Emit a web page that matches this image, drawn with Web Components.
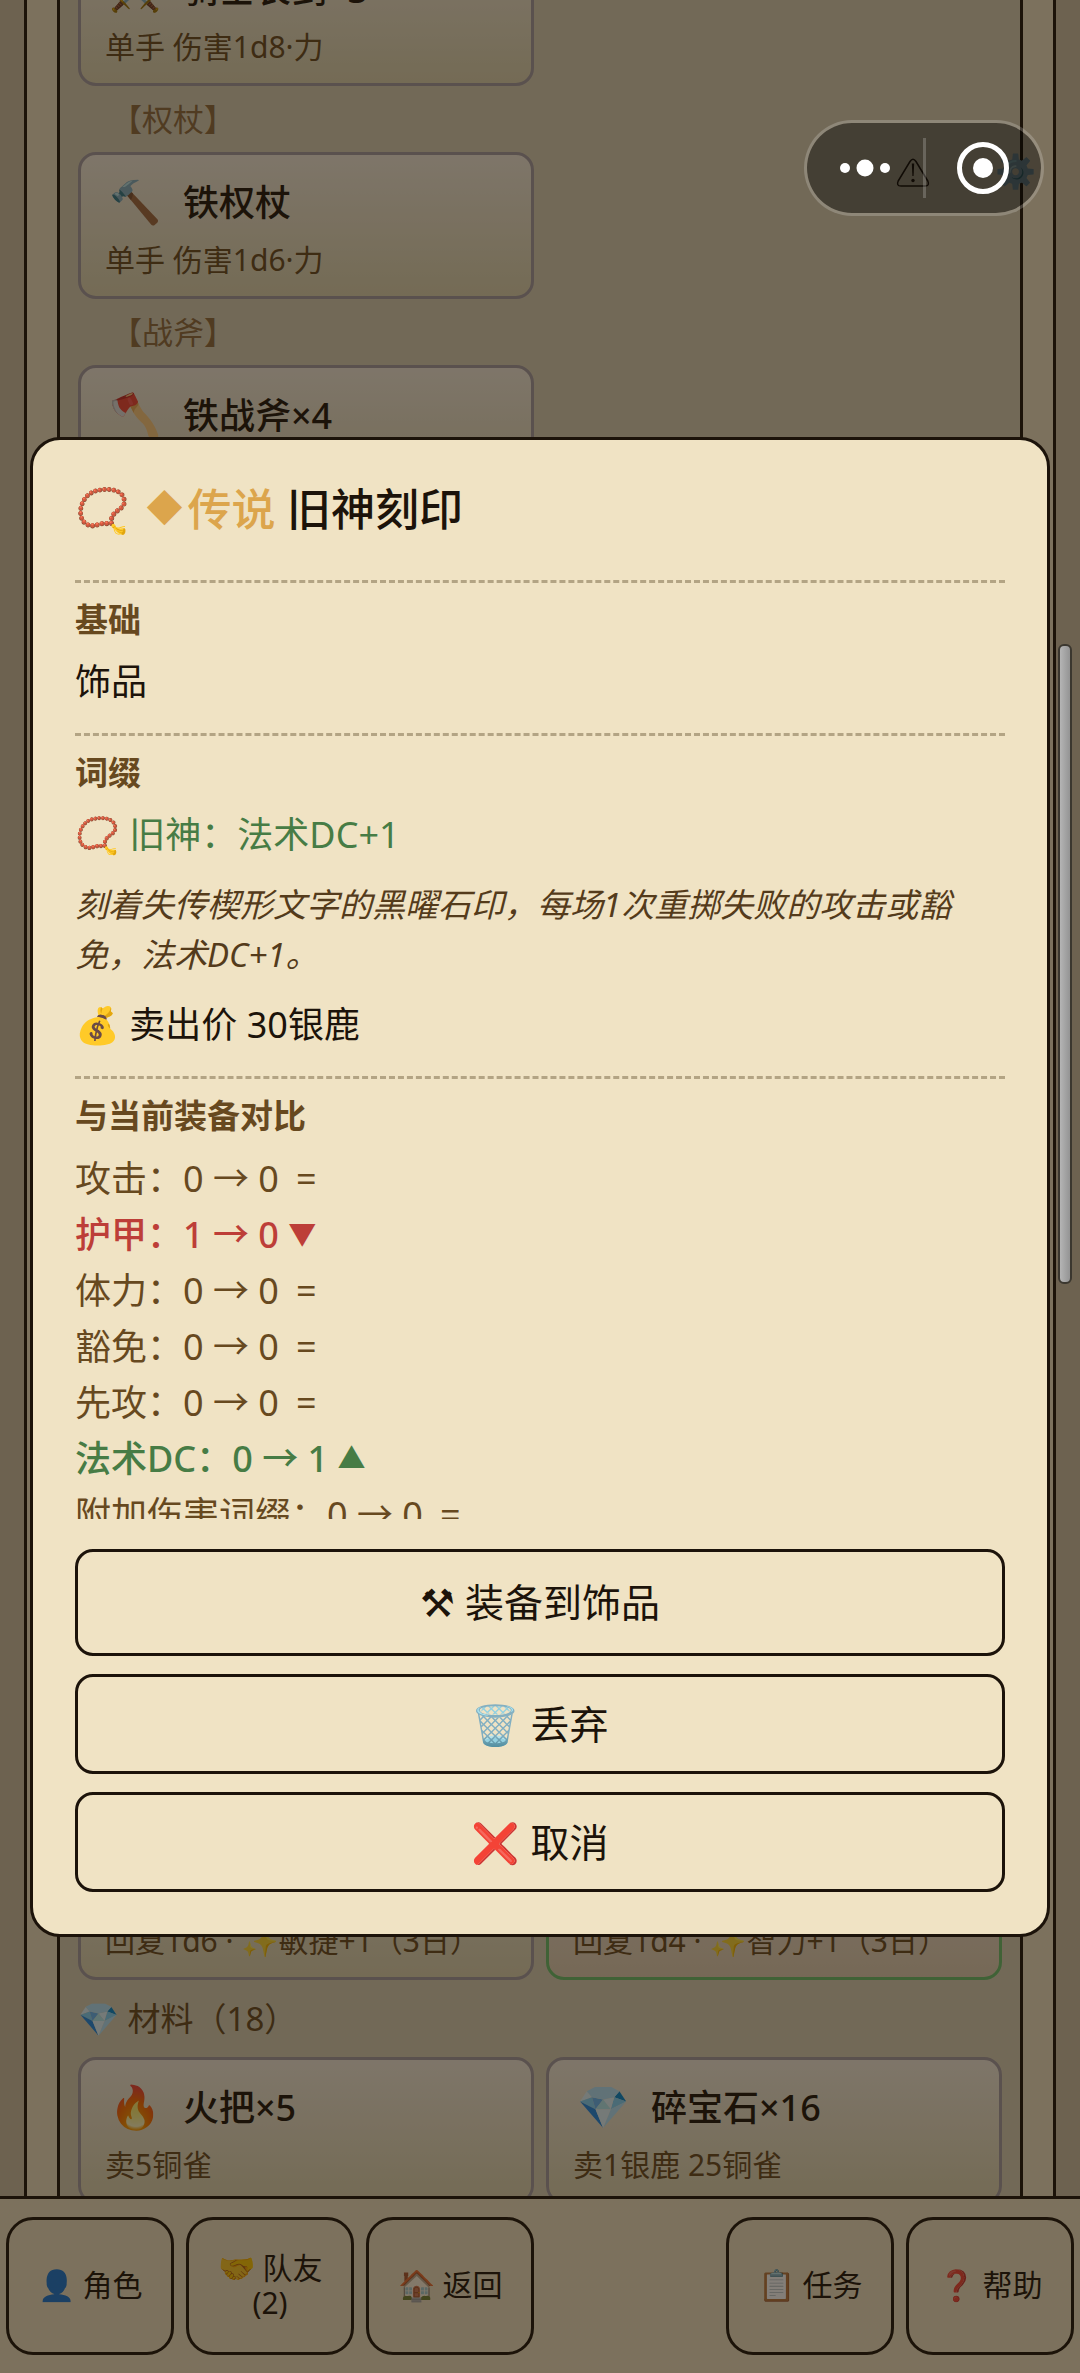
<!DOCTYPE html>
<html lang="zh-CN">
<head>
<meta charset="utf-8">
<title>背包</title>
<meta name="viewport" content="width=device-width, initial-scale=1">
<style>
:root{
  --ink:#1c130a; --brown:#67491f; --paper:#f0e3c4; --font:"Noto Sans","Noto Sans CJK SC",sans-serif;
}
html,body{margin:0;height:100%}
body{font-family:var(--font);font-weight:400;color:var(--ink);overflow:hidden}
</style>
</head>
<body>
<game-app></game-app>
<script>
function define(name, css, html){
  const tpl=document.createElement('template');
  tpl.innerHTML='<style>*{box-sizing:border-box}'+css+'</style>'+html;
  customElements.define(name, class extends HTMLElement{
    constructor(){
      super();
      this.attachShadow({mode:'open'}).appendChild(tpl.content.cloneNode(true));
    }
  });
}

define('item-card',`
:host{display:block;border:3px solid var(--edge,#a49ba2);border-radius:18px;padding:18px 24px;
  background:linear-gradient(#f4ecde,var(--low,#ded5b1));height:147px;box-sizing:border-box}
.head{display:flex;align-items:center;gap:18px;height:60px}
.icon{width:60px;font-size:42px;line-height:56px;height:60px;text-align:center}
h3{margin:0;font-size:36px;line-height:60px;font-weight:500;white-space:nowrap}
p{margin:0;font-size:30px;line-height:54px;color:var(--brown);white-space:nowrap}
`,`<div class="head"><span class="icon"><slot name="icon"></slot></span><h3><slot name="name"></slot></h3></div><p><slot></slot></p>`);

define('group-label',`
:host{display:block;font-size:31px;line-height:66px;padding-left:33px;color:#8f6b3f}
:host([major]){font-size:33px;line-height:77px;padding-left:0;color:var(--brown)}
`,`<slot></slot>`);

define('bag-list',`
:host{display:flex;flex-direction:column;flex:1;min-height:0;box-sizing:border-box;
  margin:0 24px;padding:0 30px;border:solid var(--ink);border-width:0 3px;background:var(--paper);overflow:hidden}
.inner{flex:1;display:flex;flex-direction:column;justify-content:space-between;min-height:0;
  border:solid var(--ink);border-width:0 3px;padding:0 18px;background:#d9d1b7}
.grid{display:grid;grid-template-columns:1fr 1fr;column-gap:12px}
.grid>*{grid-column:1}
.grid>.right{grid-column:2}
.grid>.full{grid-column:1/-1}
.upper{margin-top:-61px}
.lower{margin-bottom:-8px}
.good{--edge:#6ac26e;--low:#e2cfb4}
`,`<div class="inner">
<div class="grid upper">
<item-card><span slot="icon">⚔️</span><span slot="name">骑士长剑×3</span>单手 伤害1d8·力</item-card>
<group-label class="full">【权杖】</group-label>
<item-card><span slot="icon">🔨</span><span slot="name">铁权杖</span>单手 伤害1d6·力</item-card>
<group-label class="full">【战斧】</group-label>
<item-card><span slot="icon">🪓</span><span slot="name">铁战斧×4</span></item-card>
</div>
<div class="grid lower">
<item-card>回复1d6 · ✨敏捷+1（3日）</item-card>
<item-card class="right good">回复1d4 · ✨智力+1（3日）</item-card>
<group-label class="full" major>💎 材料（18）</group-label>
<item-card><span slot="icon">🔥</span><span slot="name">火把×5</span>卖5铜雀</item-card>
<item-card class="right"><span slot="icon">💎</span><span slot="name">碎宝石×16</span>卖1银鹿 25铜雀</item-card>
</div></div>`);

define('nav-button',`
:host{display:block}
button{display:block;width:100%;height:138px;padding:0 12px 3px;border:3px solid var(--ink);border-radius:27px;background:transparent;
  font:inherit;font-size:30px;line-height:35px;color:var(--ink)}
`,`<button type="button"><slot></slot></button>`);

define('bottom-nav',`
:host{display:block;border-top:3px solid var(--ink);background:var(--paper)}
nav{display:grid;grid-template-columns:repeat(6,1fr);gap:12px;padding:18px 6px}
.far{grid-column:5}
`,`<nav><nav-button>👤 角色</nav-button><nav-button>🤝 队友<br>(2)</nav-button><nav-button>🏠 返回</nav-button>
<nav-button class="far">📋 任务</nav-button><nav-button>❓ 帮助</nav-button></nav>`);

define('info-section',`
:host{display:block;border-top:3px dashed #b3a484;padding:12px 0 24px}
h3{margin:0 0 10px;font-size:33px;line-height:50px;font-weight:700;color:var(--brown)}
`,`<h3><slot name="title"></slot></h3><slot></slot>`);

define('compare-row',`
:host{display:block;font-size:36px;line-height:56px;color:var(--brown);white-space:nowrap}
:host([trend]){font-weight:500}
:host([trend=down]){color:#bd3e38}
:host([trend=up]){color:#477c45}
.mark{display:inline-block;min-width:36px;text-align:center}
:host([trend]) .mark{min-width:28px;font-size:28px;line-height:28px;vertical-align:3px}
`,`<slot></slot> <span class="mark"><slot name="mark"></slot></span>`);

define('action-button',`
:host{display:block}
button{display:block;width:100%;height:100px;border:3px solid var(--ink);border-radius:18px;background:transparent;
  font:inherit;font-size:39px;line-height:58px;color:var(--ink)}
:host([primary]) button{height:107px}
`,`<button type="button"><slot></slot></button>`);

define('item-dialog',`
:host{display:flex;flex-direction:column;width:100%;max-height:calc(100vh - 873px);box-sizing:border-box;padding:42px;
  border:3px solid var(--ink);border-radius:30px;background:var(--paper)}
.scroll{flex:1;min-height:0;overflow:auto;scrollbar-width:none}
h2{margin:0 0 44px;font-size:44px;line-height:54px;font-weight:500}
.rare{color:#dca54c}
.gem{margin:0 5px;font-size:36px;line-height:36px;vertical-align:4px}
.line{margin:0;font-size:36px;line-height:54px}
.affix{color:#477c45}
.lore{margin:18px 0;font-size:33px;line-height:50px;font-style:italic;color:#543b1b}
.actions{display:flex;flex-direction:column;gap:18px;margin-top:30px}
`,`<div class="scroll">
<h2>📿 <span class="rare"><span class="gem">◆</span>传说</span> 旧神刻印</h2>
<info-section><span slot="title">基础</span><p class="line">饰品</p></info-section>
<info-section><span slot="title">词缀</span><p class="line affix">📿 旧神：法术DC+1</p>
<p class="lore">刻着失传楔形文字的黑曜石印，每场1次重掷失败的攻击或豁免，法术DC+1。</p>
<p class="line">💰 卖出价 30银鹿</p></info-section>
<info-section><span slot="title">与当前装备对比</span>
<compare-row>攻击：0 → 0<span slot="mark">=</span></compare-row>
<compare-row trend="down">护甲：1 → 0<span slot="mark">▼</span></compare-row>
<compare-row>体力：0 → 0<span slot="mark">=</span></compare-row>
<compare-row>豁免：0 → 0<span slot="mark">=</span></compare-row>
<compare-row>先攻：0 → 0<span slot="mark">=</span></compare-row>
<compare-row trend="up">法术DC：0 → 1<span slot="mark">▲</span></compare-row>
<compare-row>附加伤害词缀：0 → 0<span slot="mark">=</span></compare-row>
</info-section></div>
<div class="actions"><action-button primary>⚒ 装备到饰品</action-button><action-button>🗑️ 丢弃</action-button><action-button>❌ 取消</action-button></div>`);

define('quick-tools',`
:host{position:absolute;top:150px;right:44px;display:flex;align-items:center;gap:65px}
svg{display:block;width:34px;height:34px}
.gear{font-size:33px;line-height:42px}
`,`<svg viewBox="0 0 34 34" fill="none" stroke="#1c130a" stroke-width="1.5" stroke-linejoin="round"><path d="M14 7.500q3-4.500 6 0L31.800 27q2.200 5-2.800 5H5q-5 0-2.800-5z"/><path d="M15.800 9.500h2.400l-.6 12.500h-1.200z" fill="#1c130a" stroke="none"/><circle cx="17" cy="26.500" r="1.700" fill="#1c130a" stroke="none"/></svg><span class="gear">⚙️</span>`);

define('scroll-thumb',`
:host{position:absolute;top:644px;right:8px;width:14px;height:640px;box-sizing:border-box;border:2px solid #3b372f;border-radius:6px;
  background:linear-gradient(90deg,#b4b4b4,#949494)}
`,``);

define('mini-capsule',`
:host{position:absolute;top:120px;right:36px;width:240px;height:96px;box-sizing:border-box;display:flex;align-items:center;
  border:3px solid rgba(255,255,255,.2);border-radius:48px;background:rgba(0,0,0,.4);background-clip:padding-box}
button{flex:1;display:grid;place-items:center;padding:0;border:0;background:none;height:90px}
i{width:3px;height:60px;background:rgba(255,255,255,.2)}
svg{display:block}
`,`<button type="button" aria-label="更多"><svg width="50" height="18" viewBox="0 0 50 18" fill="#fff"><circle cx="5" cy="9" r="5"/><circle cx="25" cy="9" r="8.500"/><circle cx="45" cy="9" r="5"/></svg></button><i></i><button type="button" aria-label="关闭"><svg width="52" height="52" viewBox="0 0 52 52"><circle cx="26" cy="26" r="23.500" fill="none" stroke="#fff" stroke-width="5"/><circle cx="26" cy="26" r="10" fill="#fff"/></svg></button>`);

define('game-app',`
:host{display:block;position:relative;height:100vh;overflow:hidden}
.page{display:flex;flex-direction:column;height:100%;background:#cec1a6}
.shade{position:absolute;inset:0;display:flex;align-items:center;padding:0 30px;background:rgba(30,20,10,.55)}
`,`<div class="page"><bag-list></bag-list><bottom-nav></bottom-nav></div>
<quick-tools></quick-tools>
<div class="shade"><item-dialog></item-dialog></div>
<scroll-thumb></scroll-thumb>
<mini-capsule></mini-capsule>`);
</script>
</body>
</html>
